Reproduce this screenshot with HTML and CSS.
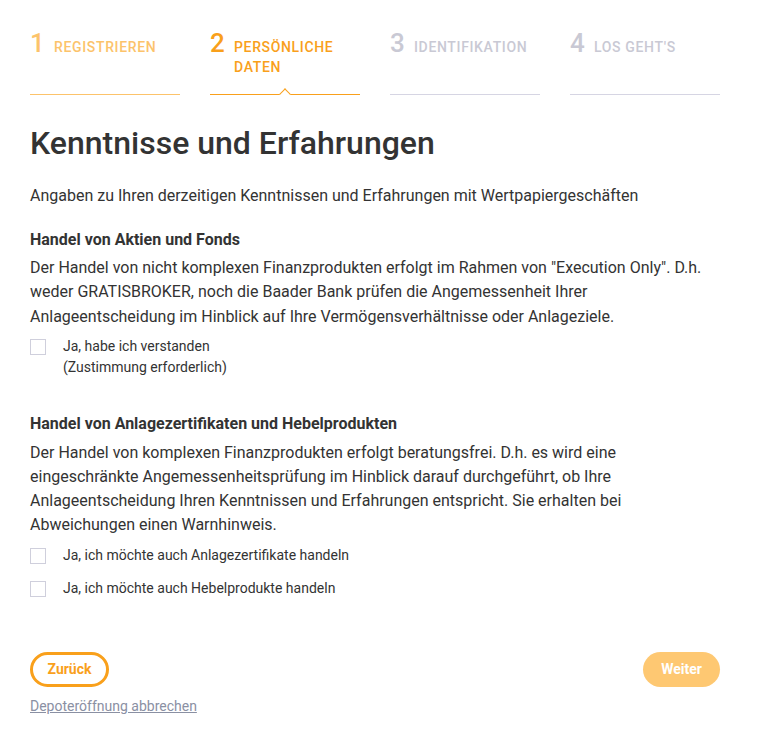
FILE: index.html
```html
<!DOCTYPE html>
<html lang="de">
<head>
<meta charset="utf-8">
<link rel="stylesheet" href="styles.css">
</head>
<body>
<div class="page">
  <ol class="steps">
    <li class="step done"><span class="num">1</span><span class="label">Registrieren</span></li>
    <li class="step active"><span class="num">2</span><span class="label">Persönliche Daten</span></li>
    <li class="step"><span class="num">3</span><span class="label">Identifikation</span></li>
    <li class="step"><span class="num">4</span><span class="label">Los geht's</span></li>
  </ol>

  <h1 class="title">Kenntnisse und Erfahrungen</h1>
  <p class="intro">Angaben zu Ihren derzeitigen Kenntnissen und Erfahrungen mit Wertpapiergeschäften</p>

  <section class="block">
    <h2 class="sub">Handel von Aktien und Fonds</h2>
    <p class="text">Der Handel von nicht komplexen Finanzprodukten erfolgt im Rahmen von "Execution Only". D.h. weder GRATISBROKER, noch die Baader Bank prüfen die Angemessenheit Ihrer Anlageentscheidung im Hinblick auf Ihre Vermögensverhältnisse oder Anlageziele.</p>
    <label class="check"><span class="box"></span><span class="ctext">Ja, habe ich verstanden<br>(Zustimmung erforderlich)</span></label>
  </section>

  <section class="block second">
    <h2 class="sub">Handel von Anlagezertifikaten und Hebelprodukten</h2>
    <p class="text">Der Handel von komplexen Finanzprodukten erfolgt beratungsfrei. D.h. es wird eine eingeschränkte Angemessenheitsprüfung im Hinblick darauf durchgeführt, ob Ihre Anlageentscheidung Ihren Kenntnissen und Erfahrungen entspricht. Sie erhalten bei Abweichungen einen Warnhinweis.</p>
    <label class="check"><span class="box"></span><span class="ctext">Ja, ich möchte auch Anlagezertifikate handeln</span></label>
    <label class="check"><span class="box"></span><span class="ctext">Ja, ich möchte auch Hebelprodukte handeln</span></label>
  </section>

  <div class="actions">
    <button class="btn back">Zurück</button>
    <button class="btn next">Weiter</button>
  </div>
  <a class="cancel" href="#">Depoteröffnung abbrechen</a>
</div>
</body>
</html>
```

FILE: styles.css
```css
* { box-sizing: border-box; }
html, body { margin: 0; padding: 0; background: #fff; }
body { font-family: Roboto, "Noto Sans", sans-serif; color: #333; }
.page { width: 690px; margin-left: 30px; padding-top: 28px; }

.steps { list-style: none; margin: 0; padding: 0; display: grid; grid-template-columns: repeat(4, 150px); column-gap: 30px; }
.step { position: relative; display: flex; align-items: flex-start; height: 67px; border-bottom: 1px solid #d6d5e3; color: #c9c9d4; }
.step .num { font-size: 26px; font-weight: 500; line-height: 30px; width: 24px; flex: none; }
.step .label { font-size: 14px; font-weight: 500; text-transform: uppercase; letter-spacing: 0.65px; line-height: 20px; padding-top: 9px; }
.step.done { color: #fcc36b; border-bottom-color: #fcc36b; }
.step.active { color: #f9a01b; border-bottom-color: #f9a01b; }
.step.active .label { width: 120px; }
.step.active::after { content: ""; position: absolute; left: 71px; bottom: -4px; width: 7px; height: 7px; background: #fff; border-left: 1px solid #f9a01b; border-top: 1px solid #f9a01b; transform: rotate(45deg); }

.title { font-size: 32px; font-weight: 500; margin: 28px 0 0; line-height: 40px; color: #333; }
.intro { font-size: 16px; margin: 21px 0 0; line-height: 24px; }
.block { margin-top: 20px; }
.block.second { margin-top: 34px; }
.sub { font-size: 16px; font-weight: 700; margin: 0; line-height: 24px; }
.text { font-size: 16px; margin: 4px 0 0; line-height: 24.3px; }
.block.second .text { margin-top: 5px; line-height: 24px; }
.check { display: flex; align-items: flex-start; margin-top: 7px; font-size: 14px; line-height: 21px; color: #333; }
.block.second .check { margin-top: 8px; }
.block.second .check + .check { margin-top: 12px; }
.box { width: 16px; height: 16px; border: 1px solid #cfcfdc; margin-top: 3px; flex: none; margin-right: 17px; }

.actions { display: flex; justify-content: space-between; margin-top: 53px; }
.btn { font-family: Roboto, sans-serif; font-size: 14px; font-weight: 700; height: 35px; border-radius: 18px; cursor: pointer; }
.back { width: 79px; background: #fff; border: 3px solid #f9a01b; color: #f9a01b; }
.next { width: 77px; background: #fec872; border: 0; color: #fff; }
.cancel { display: inline-block; margin-top: 9px; font-size: 14px; color: #8a90a3; text-decoration: underline; line-height: 20px; }
```
